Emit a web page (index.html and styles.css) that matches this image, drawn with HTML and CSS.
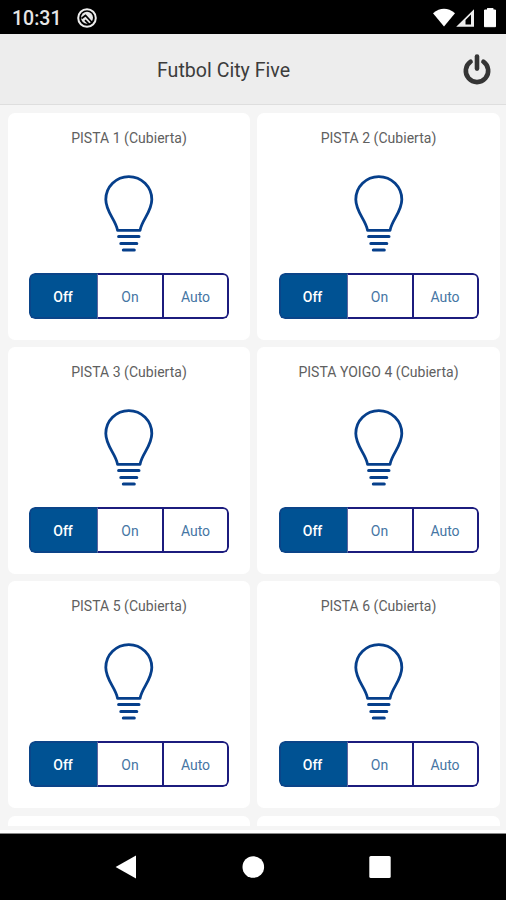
FILE: index.html
```
<!DOCTYPE html>
<html lang="es">
<head>
<meta charset="utf-8">
<title>Futbol City Five</title>
<link rel="stylesheet" href="styles.css">
</head>
<body>
<svg class="defs" aria-hidden="true">
  <symbol id="bulb" viewBox="0 0 50 78">
    <path d="M13.6 55.4C11.6 44.5 1.8 37 1.8 24.6a23 23 0 0 1 46 0C47.8 37 38 44.5 36 55.4Z" stroke-width="2.8" stroke-linejoin="round"/>
    <path d="M14.6 61.6H35M16.8 68.6H32.8M19.3 75H30.3" stroke-width="3" stroke-linecap="round"/>
  </symbol>
</svg>
<header class="status">
  <span class="clock">10:31</span>
  <svg class="notice" viewBox="0 0 20 20"><circle cx="10" cy="10" r="8.8" fill="none" stroke="#eee" stroke-width="2"/><circle cx="10" cy="9.8" r="6" fill="#e8e8e8"/><path d="M4.5 10.5 8.5 7.5 15.5 15M8 12.2l4 4" fill="none" stroke="#000" stroke-width="1.7"/></svg>
  <svg class="signals" viewBox="0 0 64 20"><path d="M0 5.2Q11 -3.5 22 5.2L11 18.5Z" fill="#fff"/><path d="M23.2 18.7 41 1.2V18.7ZM32.5 16.4H38V6.5L32.5 12Z" fill="#eee" fill-rule="evenodd"/><path d="M51.5 2h3V.3h5.5V2h2.5V18.7h-11Z" fill="#fff" stroke="#fff" stroke-linejoin="round"/></svg>
</header>
<div class="toolbar">
  <h1 class="title">Futbol City Five</h1>
  <svg class="power" viewBox="0 0 28 30"><path d="M7.6 7.7a11.2 11.2 0 1 0 12.8 0" /><path d="M14 2.6V14.6"/></svg>
</div>
<main class="courts">
  <section class="card"><h2 class="name">PISTA 1 (Cubierta)</h2><svg class="bulb"><use href="#bulb"/></svg><div class="modes"><button class="mode active">Off</button><button class="mode">On</button><button class="mode">Auto</button></div></section>
  <section class="card"><h2 class="name">PISTA 2 (Cubierta)</h2><svg class="bulb"><use href="#bulb"/></svg><div class="modes"><button class="mode active">Off</button><button class="mode">On</button><button class="mode">Auto</button></div></section>
  <section class="card"><h2 class="name">PISTA 3 (Cubierta)</h2><svg class="bulb"><use href="#bulb"/></svg><div class="modes"><button class="mode active">Off</button><button class="mode">On</button><button class="mode">Auto</button></div></section>
  <section class="card"><h2 class="name">PISTA YOIGO 4 (Cubierta)</h2><svg class="bulb"><use href="#bulb"/></svg><div class="modes"><button class="mode active">Off</button><button class="mode">On</button><button class="mode">Auto</button></div></section>
  <section class="card"><h2 class="name">PISTA 5 (Cubierta)</h2><svg class="bulb"><use href="#bulb"/></svg><div class="modes"><button class="mode active">Off</button><button class="mode">On</button><button class="mode">Auto</button></div></section>
  <section class="card"><h2 class="name">PISTA 6 (Cubierta)</h2><svg class="bulb"><use href="#bulb"/></svg><div class="modes"><button class="mode active">Off</button><button class="mode">On</button><button class="mode">Auto</button></div></section>
  <section class="card peek"></section>
  <section class="card peek"></section>
</main>
<div class="edge"></div>
<nav class="navbar">
  <svg class="key" viewBox="0 0 24 24"><path d="M.6 12 21 .4V23.6Z"/></svg>
  <svg class="key" viewBox="0 0 24 24"><circle cx="12.3" cy="12" r="10.8"/></svg>
  <svg class="key" viewBox="0 0 24 24"><rect x="1.3" y="1" width="21.4" height="22" rx="1.5"/></svg>
</nav>
</body>
</html>
```
FILE: styles.css
```
* { box-sizing: border-box; }

body {
  margin: 0;
  width: 506px;
  height: 900px;
  display: flex;
  flex-direction: column;
  overflow: hidden;
  background: #f5f5f5;
  font-family: Roboto, "Liberation Sans", sans-serif;
}

.defs { display: none; }

.status {
  height: 34px;
  flex: none;
  display: flex;
  align-items: center;
  padding: 1px 9px 0 12px;
  background: #000;
  color: #e6e6e6;
}

.clock {
  width: 65px;
  padding-top: 2px;
  font-size: 19.5px;
  font-weight: 500;
  line-height: 34px;
}

.notice { width: 20px; height: 20px; }

.signals {
  width: 64px;
  height: 20px;
  margin-left: auto;
}

.toolbar {
  height: 71px;
  flex: none;
  display: grid;
  grid-template-columns: 1fr 28px;
  align-items: center;
  padding: 0 15.5px 0 0;
  background: #ededed;
  border-bottom: 1px solid #dedede;
}

.title {
  margin: 2px 0 0;
  padding-left: 157px;
  font-size: 19.6px;
  font-weight: 400;
  color: #3c3c3c;
  white-space: nowrap;
}

.power {
  width: 28px;
  height: 30px;
  fill: none;
  stroke: #353535;
  stroke-width: 4.6;
  stroke-linecap: round;
  overflow: visible;
}

.courts {
  height: 725px;
  flex: none;
  display: grid;
  grid-template-columns: 242px 243px;
  grid-template-rows: repeat(3, 227px) 10px;
  gap: 7.2px 7px;
  padding: 8px 0 0 8px;
}

.card {
  display: flex;
  flex-direction: column;
  align-items: center;
  border-radius: 7px;
  background: #fff;
}

.card.peek { border-radius: 7px 7px 0 0; }

.name {
  margin: 16px 0 0;
  height: 18px;
  font-size: 14px;
  line-height: 18px;
  letter-spacing: 0.03px;
  font-weight: 400;
  color: #606060;
  white-space: nowrap;
}

.bulb {
  width: 50px;
  height: 78px;
  margin-top: 28px;
  fill: none;
  stroke: #063f8b;
}

.modes {
  display: grid;
  grid-template-columns: 69px 66px 65px;
  height: 46px;
  margin-top: 20px;
  border-radius: 6px;
  overflow: hidden;
  background: #fff;
}

.mode {
  margin: 0;
  padding: 1px 0 0;
  border: 2px solid #1c1c7e;
  border-left-width: 0;
  background: #fff;
  color: #4676a4;
  font: 400 14px Roboto, "Liberation Sans", sans-serif;
}

.mode:last-child { border-radius: 0 6px 6px 0; }

.mode.active {
  padding-right: 2px;
  border: 2px solid #0b4589;
  border-right-color: #60659e;
  border-right-width: 1px;
  border-radius: 6px 0 0 6px;
  background: #005293;
  color: #fff;
  font-weight: 500;
}

.edge {
  height: 4px;
  flex: none;
  border-bottom: 1px solid #888;
  background: #fff;
}

.navbar {
  flex: 1;
  display: flex;
  justify-content: center;
  align-items: center;
  gap: 102.5px;
  background: #000;
}

.key {
  width: 24px;
  height: 24px;
  fill: #fff;
}
```
